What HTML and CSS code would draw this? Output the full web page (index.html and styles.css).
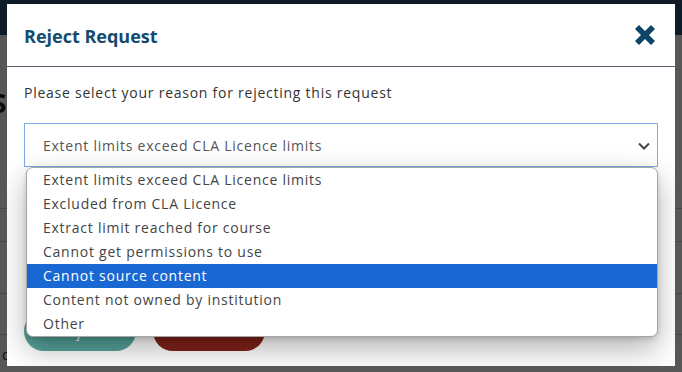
FILE: index.html
```html
<!DOCTYPE html>
<html lang="en">
<head>
    <meta charset="UTF-8">
    <meta name="viewport" content="width=device-width, initial-scale=1.0">
    <title>Reject Request</title>
    <link rel="stylesheet" href="styles.css">
</head>
<body>
    <div class="page">
        <header class="topbar"></header>
        <main class="content">
            <h2 class="page-title">S</h2>
            <table class="requests">
                <tr class="row-head"><td>&nbsp;</td></tr>
                <tr class="row-a"><td>&nbsp;</td></tr>
                <tr class="row-b"><td>&nbsp;</td></tr>
                <tr class="row-c"><td>&nbsp;</td></tr>
                <tr class="row-d"><td>&nbsp;</td></tr>
                <tr class="row-e"><td>c</td></tr>
            </table>
        </main>
    </div>

    <div class="overlay"></div>

    <div class="modal">
        <div class="modal-header">
            <h3>Reject Request</h3>
            <button class="close-btn" aria-label="Close">
                <svg width="22" height="22" viewBox="0 0 22 22">
                    <path d="M1 5 5 1 11 7 17 1 21 5 15 11 21 17 17 21 11 15 5 21 1 17 7 11Z" fill="#0d4467"/>
                </svg>
            </button>
        </div>
        <div class="modal-body">
            <p>Please select your reason for rejecting this request</p>
            <div class="select-box">
                <span>Extent limits exceed CLA Licence limits</span>
                <svg class="chevron" width="12" height="8" viewBox="0 0 12 8">
                    <path d="M1 1.5 6 6.5 11 1.5" fill="none" stroke="#444" stroke-width="2"/>
                </svg>
            </div>
            <div class="actions">
                <button class="btn btn-teal">Reject</button>
                <button class="btn btn-red">Cancel</button>
            </div>

            <ul class="options">
                <li>Extent limits exceed CLA Licence limits</li>
                <li>Excluded from CLA Licence</li>
                <li>Extract limit reached for course</li>
                <li>Cannot get permissions to use</li>
                <li class="active">Cannot source content</li>
                <li>Content not owned by institution</li>
                <li>Other</li>
            </ul>
        </div>
    </div>
</body>
</html>
```

FILE: styles.css
```css
* { box-sizing: border-box; }
body { margin: 0; font-family: 'Open Sans', 'DejaVu Sans', sans-serif; background-color: #fff; overflow: hidden; height: 372px; }

.page { height: 372px; }
.topbar { height: 35px; background-color: #2d5377; }
.content { padding: 50px 0 0 0; }
.page-title { margin: 0 0 20px -8px; font-size: 26px; color: #222; height: 40px; }
.requests { width: 100%; border-collapse: collapse; }
.requests td { border-bottom: 1px solid #ccc; padding: 0 2px; font-size: 14px; color: #222; }
.row-head td { height: 18px; border-bottom: 0; }
.row-a td { height: 44px; }
.row-b td { height: 33px; }
.row-c td { height: 52px; }
.row-d td { height: 41px; }
.row-e td { height: 40px; border-bottom: 0; }

.overlay { position: absolute; inset: 0; background-color: rgba(0, 0, 0, 0.66); }

.modal { position: absolute; left: 7px; top: 4px; width: 668px; height: 362px; background-color: #fff; overflow: hidden; }
.modal-header { display: flex; align-items: center; justify-content: space-between; height: 63px; padding: 0 19px 0 17px; border-bottom: 1px solid #56606c; }
.modal-header h3 { margin: 0; font-size: 18px; font-weight: 700; color: #134b6f; padding-top: 2px; }
.close-btn { border: 0; background: none; padding: 0; width: 22px; height: 22px; display: flex; }

.modal-body { position: relative; padding: 15px 17px 0 17px; letter-spacing: 0.75px; }
.modal-body p { margin: 0 0 19px 0; font-size: 14px; color: #333; line-height: 22px; }

.select-box { display: flex; align-items: center; justify-content: space-between; height: 44px; border: 1px solid #7ea8e6; padding: 0 7px 0 18px; font-size: 14px; color: #555; }
.chevron { margin-top: 1px; }

.actions { display: flex; gap: 17px; margin-top: 144px; }
.btn { width: 112px; height: 40px; border: 0; border-radius: 20px; color: #fff; font-size: 14px; font-family: inherit; }
.btn-teal { background-color: #55a39b; }
.btn-red { background-color: #80221a; }

.options { position: absolute; left: 19px; top: 100px; width: 632px; margin: 0; padding: 0; list-style: none; background-color: #fff; border: 1px solid #a6a6a6; border-radius: 7px; overflow: hidden; box-shadow: 0 12px 30px rgba(0, 0, 0, 0.3), 0 2px 5px rgba(0, 0, 0, 0.15); }
.options li { height: 24px; line-height: 24px; padding-left: 16px; font-size: 14px; color: #444; }
.options li.active { background-color: #1967d2; color: #fff; }
```
